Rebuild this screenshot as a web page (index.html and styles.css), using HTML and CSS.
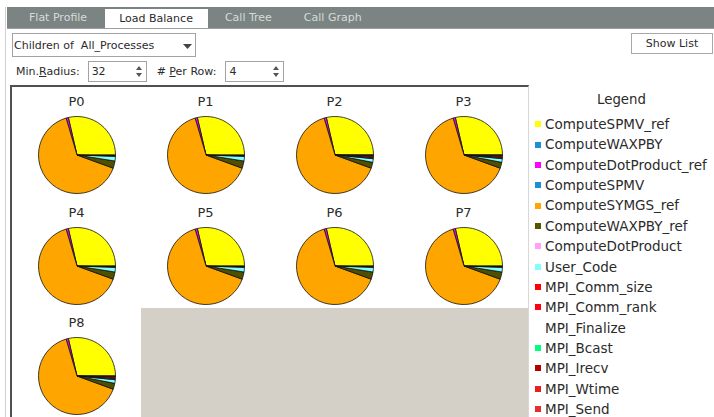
FILE: index.html
```html
<!DOCTYPE html>
<html>
<head>
<meta charset="utf-8">
<title>Load Balance</title>
<link rel="stylesheet" href="styles.css">
</head>
<body>
<div class="app">
  <nav class="tabs">
    <span class="tab">Flat Profile</span>
    <span class="tab active">Load Balance</span>
    <span class="tab">Call Tree</span>
    <span class="tab">Call Graph</span>
  </nav>

  <div class="toolbar">
    <div class="combo">
      <span>Children of&nbsp; All_Processes</span>
      <svg class="combo-arrow" width="9" height="5" viewBox="0 0 9 5"><path d="M0 0H9L4.5 5Z"/></svg>
    </div>
    <button class="btn">Show List</button>
  </div>

  <div class="spins">
    <span class="lbl">Min.<u>R</u>adius:</span>
    <div class="spin">
      <span>32</span>
      <svg class="spin-arrows" width="6" height="11" viewBox="0 0 6 11"><path d="M3 0L6 4H0Z M0 7H6L3 11Z"/></svg>
    </div>
    <span class="lbl lbl-row"># <u>P</u>er Row:</span>
    <div class="spin">
      <span>4</span>
      <svg class="spin-arrows" width="6" height="11" viewBox="0 0 6 11"><path d="M3 0L6 4H0Z M0 7H6L3 11Z"/></svg>
    </div>
  </div>

  <div class="main">
    <div class="chart">
      <div class="cell">
        <div class="pname">P0</div>
        <svg class="pie" viewBox="-40 -40 80 80" width="80" height="80">
          <defs>
            <!-- share of time per function, slices counter-clockwise from 3 o'clock -->
            <g id="pie-a">
              <path fill="#ffff00" d="M0 0L38.5 0A38.5 38.5 0 0 0 -8.66 -37.51Z"/>
              <path fill="#ff00ff" d="M0 0L-8.66 -37.51A38.5 38.5 0 0 0 -10.93 -36.91Z"/>
              <path fill="#ffa500" d="M0 0L-10.93 -36.91A38.5 38.5 0 1 0 36.18 13.17Z"/>
              <path fill="#4f4f00" d="M0 0L36.18 13.17A38.5 38.5 0 0 0 38.03 6.02Z"/>
              <path fill="#80ffff" d="M0 0L38.03 6.02A38.5 38.5 0 0 0 38.48 1.34Z"/>
              <path fill="#2a0000" d="M0 0L38.48 1.34A38.5 38.5 0 0 0 38.5 0Z"/>
            </g>
            <g id="pie-b">
              <path fill="#ffff00" d="M0 0L38.5 0A38.5 38.5 0 0 0 -8.66 -37.51Z"/>
              <path fill="#ff00ff" d="M0 0L-8.66 -37.51A38.5 38.5 0 0 0 -10.93 -36.91Z"/>
              <path fill="#ffa500" d="M0 0L-10.93 -36.91A38.5 38.5 0 1 0 36.18 13.17Z"/>
              <path fill="#4f4f00" d="M0 0L36.18 13.17A38.5 38.5 0 0 0 37.79 7.35Z"/>
              <path fill="#80ffff" d="M0 0L37.79 7.35A38.5 38.5 0 0 0 38.32 3.69Z"/>
              <path fill="#3c6a4c" d="M0 0L38.32 3.69A38.5 38.5 0 0 0 38.43 2.35Z"/>
              <path fill="#a00000" d="M0 0L38.43 2.35A38.5 38.5 0 0 0 38.5 0.34Z"/>
              <path fill="#ff0000" d="M0 0L38.5 0.34A38.5 38.5 0 0 0 38.5 0Z"/>
            </g>
          </defs>
          <use href="#pie-a"/>
        </svg>
      </div>
      <div class="cell">
        <div class="pname">P1</div>
        <svg class="pie" viewBox="-40 -40 80 80" width="80" height="80"><use href="#pie-a"/></svg>
      </div>
      <div class="cell">
        <div class="pname">P2</div>
        <svg class="pie" viewBox="-40 -40 80 80" width="80" height="80"><use href="#pie-b"/></svg>
      </div>
      <div class="cell">
        <div class="pname">P3</div>
        <svg class="pie" viewBox="-40 -40 80 80" width="80" height="80"><use href="#pie-b"/></svg>
      </div>
      <div class="cell">
        <div class="pname">P4</div>
        <svg class="pie" viewBox="-40 -40 80 80" width="80" height="80"><use href="#pie-a"/></svg>
      </div>
      <div class="cell">
        <div class="pname">P5</div>
        <svg class="pie" viewBox="-40 -40 80 80" width="80" height="80"><use href="#pie-a"/></svg>
      </div>
      <div class="cell">
        <div class="pname">P6</div>
        <svg class="pie" viewBox="-40 -40 80 80" width="80" height="80"><use href="#pie-a"/></svg>
      </div>
      <div class="cell">
        <div class="pname">P7</div>
        <svg class="pie" viewBox="-40 -40 80 80" width="80" height="80"><use href="#pie-a"/></svg>
      </div>
      <div class="cell">
        <div class="pname">P8</div>
        <svg class="pie" viewBox="-40 -40 80 80" width="80" height="80"><use href="#pie-b"/></svg>
      </div>
      <div class="filler"></div>
    </div>

    <aside class="legend">
      <div class="legend-title">Legend</div>
      <ul class="legend-list">
        <li><i class="sw" style="background:#ffff00"></i>ComputeSPMV_ref</li>
        <li><i class="sw" style="background:#1c8fd8"></i>ComputeWAXPBY</li>
        <li><i class="sw" style="background:#ff00ff"></i>ComputeDotProduct_ref</li>
        <li><i class="sw" style="background:#1c8fd8"></i>ComputeSPMV</li>
        <li><i class="sw" style="background:#ffa500"></i>ComputeSYMGS_ref</li>
        <li><i class="sw" style="background:#555500"></i>ComputeWAXPBY_ref</li>
        <li><i class="sw" style="background:#ffa0ff"></i>ComputeDotProduct</li>
        <li><i class="sw" style="background:#80ffff"></i>User_Code</li>
        <li><i class="sw" style="background:#ff0000"></i>MPI_Comm_size</li>
        <li><i class="sw" style="background:#ff0010"></i>MPI_Comm_rank</li>
        <li><i class="sw" style="background:#ffffff"></i>MPI_Finalize</li>
        <li><i class="sw" style="background:#00ff80"></i>MPI_Bcast</li>
        <li><i class="sw" style="background:#b00000"></i>MPI_Irecv</li>
        <li><i class="sw" style="background:#e62020"></i>MPI_Wtime</li>
        <li><i class="sw" style="background:#e03030"></i>MPI_Send</li>
      </ul>
    </aside>
  </div>
</div>
</body>
</html>
```

FILE: styles.css
```css
html, body {
  margin: 0;
  height: 417px;
  overflow: hidden;
  background: #ffffff;
}

body {
  font-family: "DejaVu Sans", "Liberation Sans", sans-serif;
  color: #2b2b2b;
}

.app {
  margin: 7px 0 0 5px;
  border-left: 1px solid #cfcfcf;
  height: 410px;
  overflow: hidden;
}

/* ---------- tab bar ---------- */
.tabs {
  margin-left: 1px;
  height: 22px;
  background: #7b8482;
  border-bottom: 1px solid #9aa19f;
  box-sizing: border-box;
  display: flex;
  align-items: flex-end;
  padding-left: 6px;
  font-size: 11px;
}

.tab {
  padding: 0 16px;
  height: 21px;
  line-height: 21px;
  color: #d6dbd9;
  white-space: nowrap;
}

.tab.active {
  height: 19px;
  line-height: 20px;
  margin: 0 1px 0 2px;
  padding: 0 15px 0 14px;
  background: #ffffff;
  color: #2b2b2b;
}

/* ---------- controls ---------- */
.toolbar {
  display: flex;
  justify-content: space-between;
  align-items: flex-start;
  margin-top: 4px;
  padding-left: 6px;
}

.combo {
  width: 184px;
  height: 24px;
  box-sizing: border-box;
  border: 1px solid #a3a3a3;
  padding: 0 0 0 1px;
  display: flex;
  align-items: center;
  justify-content: space-between;
  font-size: 11px;
  white-space: nowrap;
}

.combo-arrow {
  margin: 3px 3px 0 0;
  fill: #444;
}

.btn {
  width: 82px;
  height: 21px;
  margin-right: 1px;
  box-sizing: border-box;
  border: 1px solid #a8a8a8;
  border-radius: 0;
  background: #ffffff;
  font-family: inherit;
  font-size: 11px;
  color: #2b2b2b;
  padding: 0;
}

.spins {
  display: flex;
  align-items: center;
  margin-top: 4px;
  padding-left: 10px;
  height: 21px;
  font-size: 11px;
}

.lbl {
  white-space: nowrap;
}

.spin {
  width: 59px;
  height: 21px;
  box-sizing: border-box;
  border: 1px solid #a3a3a3;
  margin-left: 8px;
  padding: 0 4px 0 3px;
  display: flex;
  align-items: center;
  justify-content: space-between;
}

.spin-arrows {
  fill: #555;
}

.lbl-row {
  margin-left: 10px;
  margin-right: 1px;
}

/* ---------- chart + legend ---------- */
.main {
  display: flex;
  margin-top: 3px;
  height: 340px;
}

.chart {
  margin-left: 4px;
  width: 516px;
  border-style: solid;
  border-width: 2px 1px 0 2px;
  border-color: #505050 #d8d8d8 #d8d8d8 #505050;
  display: grid;
  grid-template-columns: repeat(4, 129px);
  grid-auto-rows: 110.7px;
  background: #ffffff;
}

.cell {
  display: flex;
  flex-direction: column;
  align-items: center;
  padding-top: 7px;
}

.pname {
  font-size: 13px;
  line-height: 15px;
  color: #2b2b2b;
}

.pie {
  display: block;
  margin-top: 6px;
  stroke: #111;
  stroke-width: 0.8;
  stroke-linejoin: round;
}

.filler {
  grid-column: 2 / span 3;
  background: #d4d0c8;
}

.legend {
  flex: 1;
  padding: 5px 0 0 6px;
  background: #ffffff;
}

.legend-title {
  text-align: center;
  font-size: 13.3px;
  line-height: 20px;
  margin: 0 0 4px -6px;
}

.legend-list {
  list-style: none;
  margin: 0;
  padding: 0;
  font-size: 13.5px;
}

.legend-list li {
  height: 20.36px;
  line-height: 20.36px;
  display: flex;
  align-items: center;
  white-space: nowrap;
}

.sw {
  width: 6px;
  height: 6px;
  margin-right: 4px;
  flex: none;
}
```
